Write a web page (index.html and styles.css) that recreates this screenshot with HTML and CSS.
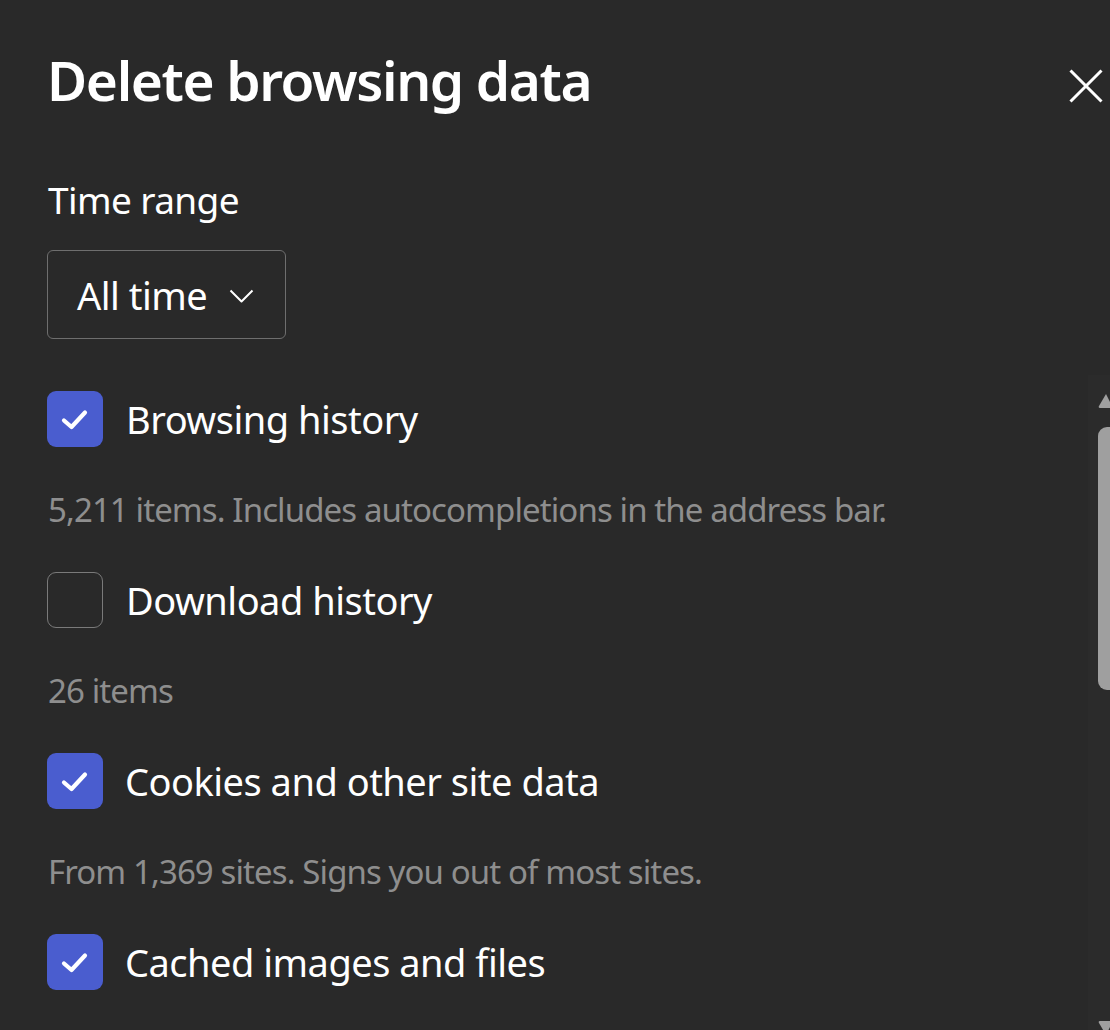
FILE: index.html
```html
<!DOCTYPE html>
<html lang="en">
<head>
<meta charset="utf-8">
<title>Delete browsing data</title>
<link rel="stylesheet" href="styles.css">
</head>
<body>
<div class="panel">
  <header class="header">
    <h1 class="title">Delete browsing data</h1>
    <button class="close" aria-label="Close">
      <svg viewBox="0 0 34 34" width="34" height="34"><path d="M1.5 1.5 L32.5 32.5 M32.5 1.5 L1.5 32.5" stroke="#fff" stroke-width="3" fill="none"/></svg>
    </button>
  </header>

  <div class="label">Time range</div>
  <div class="select">
    <span class="select-text">All time</span>
    <svg class="chev" viewBox="0 0 25 14" width="25" height="14"><path d="M1.5 1.5 L12.5 12.5 L23.5 1.5" stroke="#fff" stroke-width="2" fill="none" stroke-linejoin="round"/></svg>
  </div>

  <div class="option">
    <span class="box checked"><svg viewBox="0 0 56 56" width="56" height="56"><path d="M17 29.5 L24.5 36 L38 21.5" stroke="#fff" stroke-width="4.2" fill="none" stroke-linecap="round" stroke-linejoin="round"/></svg></span>
    <span class="opt-text">Browsing history</span>
  </div>
  <div class="sub">5,211 items. Includes autocompletions in the address bar.</div>

  <div class="option">
    <span class="box"></span>
    <span class="opt-text">Download history</span>
  </div>
  <div class="sub">26 items</div>

  <div class="option">
    <span class="box checked"><svg viewBox="0 0 56 56" width="56" height="56"><path d="M17 29.5 L24.5 36 L38 21.5" stroke="#fff" stroke-width="4.2" fill="none" stroke-linecap="round" stroke-linejoin="round"/></svg></span>
    <span class="opt-text tight">Cookies and other site data</span>
  </div>
  <div class="sub">From 1,369 sites. Signs you out of most sites.</div>

  <div class="option">
    <span class="box checked"><svg viewBox="0 0 56 56" width="56" height="56"><path d="M17 29.5 L24.5 36 L38 21.5" stroke="#fff" stroke-width="4.2" fill="none" stroke-linecap="round" stroke-linejoin="round"/></svg></span>
    <span class="opt-text tight">Cached images and files</span>
  </div>
</div>

<div class="scrollbar">
  <svg class="arrow-up" viewBox="0 0 14 16" width="14" height="16"><path d="M8 1 L14 13 Q14 15 12 15 L2 15 Q0 15 1 13 Z" fill="#9f9f9f"/></svg>
  <div class="thumb"></div>
  <svg class="arrow-down" viewBox="0 0 14 16" width="14" height="16"><path d="M8 15 L14 3 Q14 1 12 1 L2 1 Q0 1 1 3 Z" fill="#9f9f9f"/></svg>
</div>
</body>
</html>
```

FILE: styles.css
```css
html, body {
  margin: 0;
  padding: 0;
  background: #292929;
  height: 100%;
  overflow: hidden;
}

body {
  font-family: "Noto Sans", "Open Sans", sans-serif;
  color: #ffffff;
  position: relative;
}

.panel {
  padding: 48px 7px 0 48px;
}

.header {
  display: flex;
  justify-content: space-between;
  align-items: flex-start;
}

.title {
  margin: 0;
  font-size: 55px;
  line-height: 64px;
  font-weight: 600;
  letter-spacing: -1.4px;
  margin-left: -1px;
}

.close {
  margin-top: 21px;
  padding: 0;
  border: 0;
  background: transparent;
  width: 34px;
  height: 34px;
  display: block;
}

.close svg {
  display: block;
}

.label {
  margin-top: 64px;
  font-size: 37px;
  line-height: 48px;
  letter-spacing: -0.6px;
}

.select {
  margin-top: 26px;
  margin-left: -1px;
  width: 239px;
  height: 89px;
  box-sizing: border-box;
  border: 1px solid #6e6e6e;
  border-radius: 6px;
  display: flex;
  align-items: center;
  padding-left: 29px;
  gap: 22px;
}

.select-text {
  font-size: 38px;
  line-height: 48px;
  letter-spacing: -0.5px;
}

.chev {
  display: block;
  margin-top: 2px;
}

.option {
  display: flex;
  align-items: center;
  gap: 23px;
  margin-top: 52px;
  margin-left: -1px;
}

.sub + .option {
  margin-top: 40px;
}

.box {
  width: 56px;
  height: 56px;
  box-sizing: border-box;
  border: 1.5px solid #7a7a7a;
  border-radius: 9px;
  flex: none;
  display: block;
}

.box.checked {
  background: #4a5dcf;
  border: 0;
}

.box svg {
  display: block;
}

.opt-text {
  font-size: 38px;
  line-height: 48px;
  letter-spacing: -0.5px;
}

.opt-text.tight {
  margin-left: -1px;
}

.sub {
  margin-top: 41px;
  font-size: 33px;
  line-height: 44px;
  letter-spacing: -0.9px;
  color: #8e8e8e;
}

.scrollbar {
  position: absolute;
  left: 1088px;
  top: 375px;
  width: 22px;
  bottom: 0;
  background: #2b2b2b;
}

.arrow-up {
  position: absolute;
  left: 10px;
  top: 18px;
}

.thumb {
  position: absolute;
  left: 10px;
  top: 52px;
  width: 20px;
  height: 263px;
  background: #9f9f9f;
  border-radius: 9px;
}

.arrow-down {
  position: absolute;
  left: 10px;
  bottom: -6px;
}
```
